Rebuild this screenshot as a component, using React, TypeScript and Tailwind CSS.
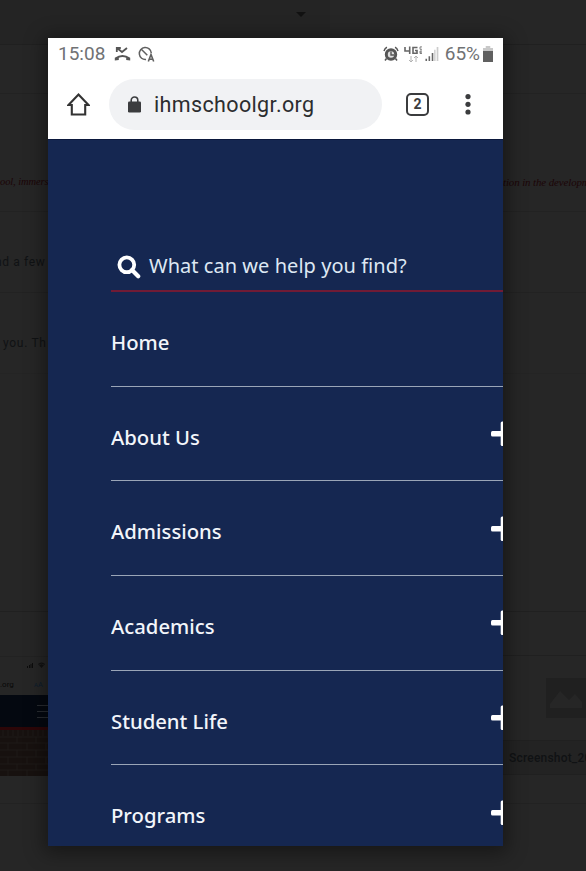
import React from "react";

const NAV = ["Home", "About Us", "Admissions", "Academics", "Student Life", "Programs"];

function Backdrop() {
  return (
    <div className="flex h-full flex-col bg-[#262626] font-[Roboto,sans-serif] text-[#101214]">
      <div className="flex h-[45px] shrink-0 border-b border-[#202020]">
        <div className="flex w-[330px] justify-end bg-[#242424] pr-6 pt-3">
          <svg className="h-[5px] w-[10px]" viewBox="0 0 10 5"><path d="M0 0h10L5 5z" fill="#111" /></svg>
        </div>
      </div>
      <div className="h-[49px] shrink-0 border-b border-[#222]" />
      <div className="flex h-[118px] shrink-0 items-end justify-between overflow-hidden whitespace-nowrap border-b border-[#222] pb-[21px] font-['Liberation_Serif',serif] text-[10.5px] italic leading-4 tracking-[-0.1px] text-[#1c0507]">
        <span>ool, immers</span>
        <span className="w-[83px] text-[10.9px]">tion in the developm</span>
      </div>
      <div className="flex h-[81px] shrink-0 items-center border-b border-[#222] pt-5 text-[12px] tracking-[0.65px]">
        <span className="ml-[-5px]">nd a few</span>
      </div>
      <div className="flex h-[81px] shrink-0 items-center border-b border-[#242424] pt-5 text-[12px] tracking-[0.7px]">
        <span className="ml-[3px]">you. Th</span>
      </div>
      <div className="h-[238px] shrink-0 border-b border-[#202020]" />
      <div className="flex h-[192px] shrink-0 justify-between border-b border-[#222]">
        <div className="mt-11 h-[120px] w-[60px] shrink-0 overflow-hidden border-t border-[#222]">
          <div className="flex h-[38px] flex-col justify-between pb-[6px] pt-[5px]">
            <div className="flex items-center gap-[5px] pl-[27px]">
              <svg className="h-[5px] w-[6px]" viewBox="0 0 6 5" fill="#0c0c0c"><path d="M0 3h1v2H0zM2 2h1v3H2zM3.5 1h1v4h-1zM5 0h1v5H5z" /></svg>
              <svg className="h-[6px] w-[7px]" viewBox="0 0 7 6"><path d="M0 2Q3.5-1 7 2L3.5 6z" fill="#111" /><path d="M1 3q2.5-2 5 0" fill="none" stroke="#262626" strokeWidth=".6" /></svg>
            </div>
            <div className="flex items-baseline text-[8px] leading-[9px]">
              <span className="w-[34px] text-[#080808]">.org</span><span className="text-[6px] text-[#0c1d2d]">A</span><span className="text-[7.5px] text-[#0c1d2d]">A</span>
            </div>
          </div>
          <div className="flex h-8 flex-col items-end justify-center gap-[5px] bg-[#040810] pr-2">
            <i className="h-px w-[15px] bg-[#292c31]" /><i className="h-px w-[15px] bg-[#292c31]" /><i className="h-px w-[15px] bg-[#292c31]" />
          </div>
          <div className="h-[3px] bg-[#2c0608]" />
          <svg className="h-[46px] w-[60px] bg-[#17110f]" viewBox="0 0 60 46">
            <path d="M3 0v6M8 0v6M13 0v6M18 0v6M23 0v6M28 0v6M33 0v6M38 0v6M43 0v6M48 0v6M0 7h60M0 13h60M0 20h60M0 27h60M0 34h60M0 40h60M17 7v6M36 7v6M8 13v7M27 13v7M46 13v7M17 20v7M36 20v7M8 27v7M27 27v7M46 27v7M17 34v6M36 34v6M8 40v6M27 40v6" stroke="#221d1a" strokeWidth=".8" fill="none" />
          </svg>
        </div>
        <div className="mt-[43px] flex h-[120px] w-[83px] shrink-0 flex-col border-y border-[#202020]">
          <div className="flex h-[85px] items-center justify-end">
            <svg className="h-10 w-10" viewBox="0 0 40 40"><path fill="#202020" d="M0 0h40v40H0z" /><path fill="#262626" d="M4 30V26L14 13 23 22 29 16 36 24v6z" /></svg>
          </div>
          <div className="flex h-[34px] items-center whitespace-nowrap border-t border-[#202020] bg-[#232323] pl-[6px] text-[12px] font-medium tracking-[0.2px]">Screenshot_20</div>
        </div>
      </div>
      <div className="flex-1" />
    </div>
  );
}

function StatusBar() {
  return (
    <div className="flex h-[32px] items-center pl-[10px] pr-[10px] font-[Roboto,sans-serif] text-[19px] text-[#707274]">
      <span>15:08</span>
      <svg className="ml-[9px] h-[17px] w-[17px]" viewBox="0 0 17 17" fill="none" stroke="#555" strokeWidth="1.8">
        <path d="M3 2l5 4 5-4M2.8 6V2h4" />
        <path d="M.8 14.5v-2.7q7.7-5.6 15.4 0v2.7l-4-.4v-2.4q-3.7-1.5-7.4 0v2.4z" fill="#555" stroke="none" />
      </svg>
      <svg className="ml-[7px] h-[17px] w-[17px]" viewBox="0 0 17 17" fill="none" stroke="#606060" strokeWidth="1.5">
        <path d="M8 13.5A6 6 0 1 1 13.3 7M3.3 3.3l6 6" /><path d="M10.3 15.5l2.7-7 2.7 7M11 13.2h4" strokeWidth="1.6" />
      </svg>
      <div className="ml-auto flex items-center">
        <svg className="h-4 w-4" viewBox="0 0 16 16" fill="none">
          <circle cx="8" cy="8.5" r="4.7" fill="#ddd" stroke="#555" strokeWidth="3" />
          <path d="M1 5q1-3 3-3.7M15 5q-1-3-3-3.7M3.5 12.5L2 14.5M12.5 12.5L14 14.5" stroke="#555" strokeWidth="1.5" />
          <path d="M8 5.5V9h3" stroke="#555" strokeWidth="1.4" />
        </svg>
        <svg className="ml-[5px] h-[17px] w-[19px]" viewBox="0 0 19 17" fill="none" stroke="#666">
          <path d="M1 1v4h5M5.7.5V8M13.5 1.5H9v5.7h4V4.5h-2" strokeWidth="1.6" />
          <path d="M18 .9h-2v2.4h2M18 5h-2v2.5h2M16 6.2h2" strokeWidth=".8" />
          <path d="M7 10v6M5 14l2 2 2-2M12 16v-6M10 12l2-2 2 2" stroke="#b2b2b2" />
        </svg>
        <svg className="ml-[2px] h-[14px] w-[14px]" viewBox="0 0 14 15">
          <path d="M0 12.5h1.7V15H0zM3.3 10H5v5H3.3zM6.7 6.5h1.7V15H6.7z" fill="#666" /><path d="M9.3 3h1.5v12H9.3zM12 0h1.8v15H12z" fill="#ccc" />
        </svg>
        <span className="ml-[6px]">65%</span>
        <svg className="ml-[3px] h-4 w-[10px]" viewBox="0 0 11 16" preserveAspectRatio="none"><path d="M0 2h3V0h5v2h3v4H0z" fill="#c8c8c8" /><path d="M0 5h11v11H0z" fill="#606060" /></svg>
      </div>
    </div>
  );
}

function AddressBar() {
  return (
    <div className="flex h-[69px] items-center font-[Roboto,sans-serif]">
      <svg className="ml-[19px] mt-[-2px] h-[24px] w-[23px]" viewBox="0 0 23 24" fill="none" stroke="#333" strokeWidth="2.1"><path d="M1.5 13L11.5 2.5l10 10.5h-3.3v9.5H4.8V13z" /></svg>
      <div className="ml-[19px] flex h-[51px] w-[273px] items-center rounded-full bg-[#f1f2f4]">
        <svg className="ml-[19px] h-[18px] w-[13px]" viewBox="0 0 13 18"><path d="M3.2 7V4.3a3.3 3.3 0 0 1 6.6 0V7" fill="none" stroke="#3b3c3e" strokeWidth="1.6" /><rect y="5.5" width="13" height="11" rx="1.3" fill="#3b3c3e" /></svg>
        <span className="ml-[13px] mt-[2px] text-[21.5px] tracking-[0.36px] text-[#2c2d2f]">ihmschoolgr.org</span>
      </div>
      <div className="ml-[24px] flex h-[23px] w-[23px] items-center justify-center rounded-[5px] border-2 border-[#3b3c3e] text-[14px] font-bold text-[#3b3c3e]">2</div>
      <svg className="ml-[36px] h-[22px] w-[6px]" viewBox="0 0 6 22" fill="#3b3c3e"><circle cx="3" cy="2.6" r="2.6" /><circle cx="3" cy="10.3" r="2.6" /><circle cx="3" cy="18" r="2.6" /></svg>
    </div>
  );
}

export default function App() {
  return (
    <div className="relative h-[871px] w-[586px] overflow-hidden">
      <Backdrop />
      <div className="absolute left-[48px] top-[38px] flex h-[808px] w-[455px] flex-col overflow-hidden bg-[#152751] shadow-[0_3px_18px_4px_rgba(0,0,0,0.4)]">
        <div className="h-[101px] shrink-0 bg-white"><StatusBar /><AddressBar /></div>
        <div className="flex flex-col border-t border-[#0b183d] pl-[63px] pt-[99px] font-['Noto_Sans',sans-serif] text-[#f2f5fa]">
          <div className="flex h-[53px] shrink-0 items-center border-b-2 border-[#701b35] pl-[6px] pt-[2px]">
            <svg className="mt-[2px] h-6 w-6" viewBox="0 0 24 24" fill="none" stroke="#fff" strokeWidth="3.8"><circle cx="9.8" cy="9.8" r="7.4" /><path d="M15 15l6.2 6.2" strokeLinecap="round" strokeWidth="4.2" /></svg>
            <span className="ml-2 text-[20px] tracking-[0.04px] text-[#dee8f3]">What can we help you find?</span>
          </div>
          <div>
            {NAV.map((label, i) => (
              <div key={label} className="flex h-[94.65px] items-center justify-between overflow-hidden border-b border-[#9aa5b7] pt-[7px]">
                <span className="text-[20.3px] font-medium">{label}</span>
                {i > 0 && (
                  <svg className="mb-[6px] h-[26px] w-3 shrink-0" viewBox="0 0 12 26" fill="#fff"><rect y="10" width="24" height="5.5" rx="1.5" /><rect x="9.7" y=".5" width="5.5" height="24.5" rx="1.5" /></svg>
                )}
              </div>
            ))}
          </div>
        </div>
      </div>
    </div>
  );
}
